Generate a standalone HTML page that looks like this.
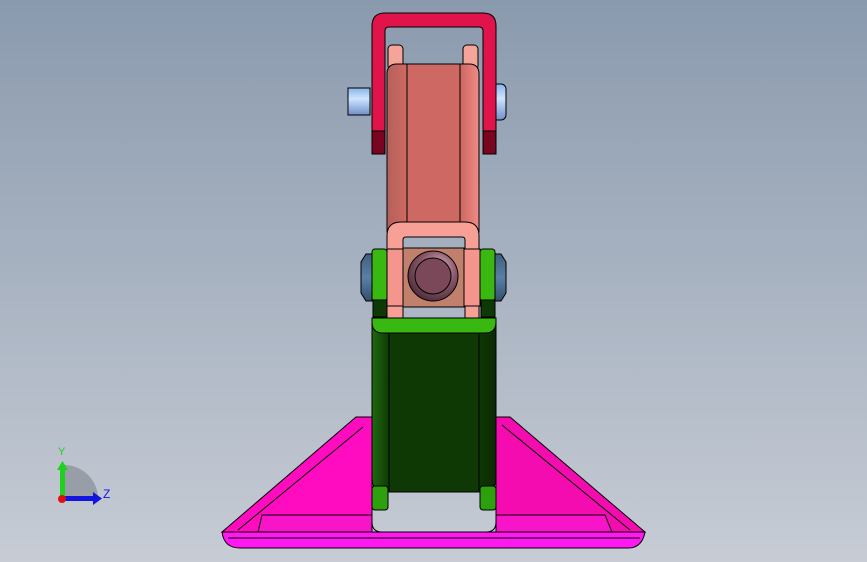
<!DOCTYPE html>
<html><head><meta charset="utf-8"><style>
html,body{margin:0;padding:0;width:867px;height:562px;overflow:hidden}
body{background:linear-gradient(#8a9aae,#c7ccd5)}
svg{position:absolute;left:0;top:0}
</style></head><body>
<svg width="867" height="562" viewBox="0 0 867 562" xmlns="http://www.w3.org/2000/svg" stroke="#000" stroke-width="1">
<defs>
<linearGradient id="sal" x1="0" x2="1"><stop offset="0" stop-color="#b5605a"/><stop offset="0.2" stop-color="#cd6862"/><stop offset="0.8" stop-color="#cd6862"/><stop offset="1" stop-color="#f08a84"/></linearGradient>
<linearGradient id="grn" x1="0" x2="1"><stop offset="0" stop-color="#1f6a0e"/><stop offset="0.14" stop-color="#0e3804"/><stop offset="0.86" stop-color="#0e3804"/><stop offset="1" stop-color="#0a2a03"/></linearGradient>
<linearGradient id="pin" x1="0" x2="0" y1="0" y2="1"><stop offset="0" stop-color="#8ab4e8"/><stop offset="0.4" stop-color="#cfe4ff"/><stop offset="1" stop-color="#6f8fc8"/></linearGradient>
<linearGradient id="cap" x1="0" x2="0" y1="0" y2="1"><stop offset="0" stop-color="#3f5f80"/><stop offset="0.5" stop-color="#5a7fa5"/><stop offset="1" stop-color="#34506e"/></linearGradient>
<radialGradient id="ring" cx="0.6" cy="0.35" r="0.7"><stop offset="0" stop-color="#e8c0d0"/><stop offset="0.5" stop-color="#8c5a6c"/><stop offset="1" stop-color="#4a2a38"/></radialGradient>
</defs>
<!-- pins -->
<rect x="348" y="88" width="22" height="27" fill="url(#pin)"/>
<rect x="492" y="84" width="14" height="36" rx="5" fill="url(#pin)"/>
<!-- pink tabs -->
<rect x="388" y="45" width="15" height="25" rx="4" fill="#f4a598"/>
<rect x="463" y="45" width="15" height="25" rx="4" fill="#f4a598"/>
<!-- red U bracket -->
<path d="M372 154 V26 Q372 13 385 13 H483 Q496 13 496 26 V154 H483 V31 Q483 27 479 27 H389 Q385 27 385 31 V154 Z" fill="#e0144a"/>
<rect x="372" y="131" width="13" height="23" fill="#7a0520"/>
<rect x="483" y="131" width="13" height="23" fill="#7a0520"/>
<!-- salmon body -->
<path d="M387 74 Q387 64 397 64 H469 Q479 64 479 74 V232 H387 Z" fill="url(#sal)"/>
<line x1="407" y1="64" x2="407" y2="222"/><line x1="460" y1="64" x2="460" y2="222"/>
<!-- lower pink frame -->
<path d="M387 318 V236 Q387 222 401 222 H465 Q479 222 479 236 V318 Z M403 240 Q403 237 406 237 H462 Q465 237 465 240 V318 H403 Z" fill="#f8a096" fill-rule="evenodd"/>
<!-- green top band and body -->
<path d="M372 318 H496 V333 H372 Z" fill="#38b810"/>
<path d="M372 318 H496 V478 Q496 492 482 492 H386 Q372 492 372 478 Z" fill="url(#grn)"/>
<path d="M372 318 H496 V322 Q496 333 485 333 H383 Q372 333 372 322 Z" fill="#38b810"/>
<line x1="389" y1="333" x2="389" y2="492"/><line x1="479" y1="333" x2="479" y2="492"/>
<rect x="372" y="486" width="16" height="24" rx="3" fill="#2ea00e"/>
<rect x="480" y="486" width="16" height="24" rx="3" fill="#2ea00e"/>
<!-- blue caps -->
<path d="M372 254 H366 L361 262 V293 L366 301 H372 Z" fill="url(#cap)"/>
<path d="M495 254 H501 L506 262 V293 L501 301 H495 Z" fill="url(#cap)"/>
<!-- green washers -->
<rect x="372" y="249" width="15" height="52" rx="3" fill="#3ab812"/>
<rect x="480" y="249" width="15" height="52" rx="3" fill="#3ab812"/>
<rect x="373" y="300" width="14" height="17" fill="#0e3804"/>
<rect x="481" y="300" width="14" height="17" fill="#0e3804"/>
<!-- pink cylinders -->
<rect x="387" y="249" width="16" height="57" fill="#f4968e"/>
<rect x="464" y="249" width="16" height="57" fill="#f4968e"/>
<rect x="403" y="248" width="61" height="59" fill="#c0806c"/>
<circle cx="433" cy="276" r="25" fill="url(#ring)"/>
<circle cx="433" cy="276" r="18" fill="#7a4858"/>
<!-- magenta base -->
<path d="M356 417 H372 V532 H222 Z" fill="#ff0cc0"/>
<path d="M496 417 H510 L645 532 H496 Z" fill="#f40cb0"/>
<line x1="363" y1="427" x2="238" y2="530"/><line x1="502" y1="425" x2="630" y2="530"/>
<path d="M262 515 H372 V532 H258 Z" fill="#f814c8"/>
<path d="M496 515 H605 L612 532 H496 Z" fill="#f814c8"/>
<path d="M222 532 H645 Q642 548 628 548 H240 Q224 548 222 532 Z" fill="#ff18f0"/>
<line x1="228" y1="538" x2="640" y2="538"/>
<path d="M372 510 V522 Q372 532 382 532 H486 Q496 532 496 522 V510" fill="none"/>
</svg>
<!-- triad -->
<svg width="120" height="80" style="left:40px;top:440px" viewBox="40 440 120 80">
<path d="M64 500 V465 A34 34 0 0 1 98 500 Z" fill="#8e949c" opacity="0.8"/>
<rect x="60" y="468" width="5" height="32" fill="#1fd01f"/>
<path d="M57 470 L62.5 461 L68 470 Z" fill="#1fd01f"/>
<rect x="62" y="496" width="33" height="5" fill="#1414e0"/>
<path d="M93 492 L102 498.5 L93 505 Z" fill="#1414e0"/>
<circle cx="62" cy="499" r="4" fill="#e01010"/>
<text x="58" y="455" font-family="Liberation Sans, sans-serif" font-size="11" fill="#20d020">Y</text>
<text x="103" y="498" font-family="Liberation Sans, sans-serif" font-size="12" fill="#1414e0">Z</text>
</svg>
</body></html>
